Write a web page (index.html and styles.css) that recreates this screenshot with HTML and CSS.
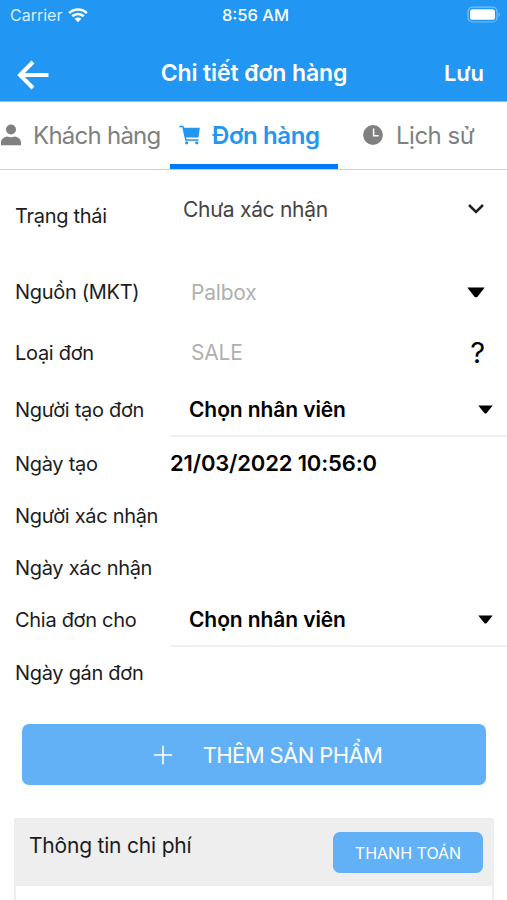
FILE: index.html
```
<!DOCTYPE html>
<html lang="vi">
	<head>
		<meta charset="utf-8">
		<meta name="viewport" content="width=device-width,initial-scale=1">
		<title>Chi tiết đơn hàng</title>
		<link rel="stylesheet" href="styles.css">
	</head>
	<body>
		<div class="screen">
			<header>
				<div class="status-bar">
					<div class="carrier">
						<span class="carrier-name">Carrier</span>
						<svg class="wifi" width="20" height="16" viewBox="0 0 20 16">
							<path d="M1.2 6.1a12.6 12.6 0 0 1 17.6 0M4.3 9.3a8.2 8.2 0 0 1 11.4 0" fill="none" stroke="#fff" stroke-width="2.7"/>
							<path d="M10 15.2L6.6 11.8a4.9 4.9 0 0 1 6.8 0z" fill="#fff"/>
						</svg>
					</div>
					<span class="time">8:56 AM</span>
					<svg class="battery" width="34" height="18" viewBox="0 0 34 18">
						<rect x="1" y="1.2" width="29" height="14.8" rx="4.5" fill="none" stroke="#fff" stroke-opacity=".4" stroke-width="1.2"/>
						<rect x="3" y="3.2" width="25" height="10.6" rx="2.6" fill="#fff"/>
						<path d="M31.6 6.3c1.6.7 1.6 3.9 0 4.6z" fill="#fff" fill-opacity=".45"/>
					</svg>
				</div>
				<div class="nav-bar">
					<svg class="back" width="32" height="30" viewBox="0 0 32 30">
						<path d="M31.500 15H3M16 2L3 15l13 13" fill="none" stroke="#fff" stroke-width="4"/>
					</svg>
					<h1>Chi tiết đơn hàng</h1>
					<span class="save">Lưu</span>
				</div>
			</header>
			<nav class="tabs">
				<div class="tab tab-customer">
					<svg width="22" height="22" viewBox="0 0 22 22" fill="#808080">
						<circle cx="11" cy="5.5" r="5"/>
						<path d="M1 21.2v-2.4c0-3.8 3-5.8 6-6.3 2.6 1 5.4 1 8 0 3 .5 6 2.5 6 6.3v2.4z"/>
					</svg>
					<span class="tab-name">Khách hàng</span>
				</div>
				<div class="tab tab-order active">
					<svg width="22" height="20" viewBox="0 0 22 20" fill="#2196f3">
						<path d="M4 2.7h16.800L19.500 12.600H6.200z"/>
						<path d="M.3 1.500h3.600L6.900 15H19.500" fill="none" stroke="#2196f3" stroke-width="1.500"/>
						<circle cx="7.6" cy="17.8" r="1.6"/>
						<circle cx="17.800" cy="17.8" r="1.6"/>
					</svg>
					<span class="tab-name">Đơn hàng</span>
				</div>
				<div class="tab tab-history">
					<svg width="20" height="20" viewBox="0 0 20 20">
						<circle cx="10" cy="10" r="9.9" fill="#808080"/>
						<path d="M10.6 3.6v7.2h5" fill="none" stroke="#fff" stroke-width="1.5"/>
					</svg>
					<span class="tab-name">Lịch sử</span>
				</div>
			</nav>
			<main>
				<div class="row row-status">
					<span class="label">Trạng thái</span>
					<div class="field">
						<span class="status-value">Chưa xác nhận</span>
						<svg class="chevron" width="18" height="12" viewBox="0 0 18 12">
							<path d="M2 2l7 7 7-7" fill="none" stroke="#222" stroke-width="2.5"/>
						</svg>
					</div>
				</div>
				<div class="row row-source">
					<span class="label">Nguồn (MKT)</span>
					<div class="field">
						<span class="placeholder">Palbox</span>
						<svg class="caret-large" width="18" height="11" viewBox="0 0 18 11">
							<path d="M.3.5h17.4L10.5 9.7q-1.5 1-3 0z"/>
						</svg>
					</div>
				</div>
				<div class="row row-type">
					<span class="label">Loại đơn</span>
					<div class="field">
						<span class="placeholder">SALE</span>
						<span class="help">?</span>
					</div>
				</div>
				<div class="row row-select">
					<span class="label">Người tạo đơn</span>
					<div class="field underlined">
						<span class="picked">Chọn nhân viên</span>
						<svg class="caret" width="15" height="9" viewBox="0 0 15 9">
							<path d="M.3.5h14.4L8.7 7.9q-1.2 1-2.4 0z"/>
						</svg>
					</div>
				</div>
				<div class="row row-date">
					<span class="label">Ngày tạo</span>
					<div class="field">
						<span class="date">21/03/2022 10:56:0</span>
					</div>
				</div>
				<div class="row">
					<span class="label">Người xác nhận</span>
				</div>
				<div class="row row-short">
					<span class="label">Ngày xác nhận</span>
				</div>
				<div class="row row-select">
					<span class="label">Chia đơn cho</span>
					<div class="field underlined">
						<span class="picked">Chọn nhân viên</span>
						<svg class="caret" width="15" height="9" viewBox="0 0 15 9">
							<path d="M.3.5h14.4L8.7 7.9q-1.2 1-2.4 0z"/>
						</svg>
					</div>
				</div>
				<div class="row row-short">
					<span class="label">Ngày gán đơn</span>
				</div>
				<div class="add-product">
					<svg width="20" height="20" viewBox="0 0 20 20">
						<path d="M10 .8v18.4M.8 10h18.4" stroke="#fff" stroke-width="1.6"/>
					</svg>
					<span class="add-name">THÊM SẢN PHẨM</span>
				</div>
				<section class="costs">
					<div class="costs-header">
						<h2>Thông tin chi phí</h2>
						<div class="pay"><span class="pay-name">THANH TOÁN</span></div>
					</div>
				</section>
			</main>
		</div>
	</body>
</html>
```
FILE: styles.css
```
* {
	margin: 0;
	padding: 0;
	box-sizing: border-box;
}
body {
	font-family: "Inter", sans-serif;
	font-size: 20px;
	background: #fff;
	color: #1c1c1e;
	overflow: hidden;
}
span, h1, h2 {
	white-space: nowrap;
}
svg {
	display: block;
	flex: none;
}
.screen {
	height: 900px;
	overflow: hidden;
}
header {
	height: 102px;
	background: #2196f3;
	border-bottom: 1px solid #7fbff5;
	color: #fff;
}
.status-bar {
	display: grid;
	grid-template-columns: 1fr auto 1fr;
	align-items: center;
	height: 30px;
	padding: 0 6px 0 10px;
}
.carrier {
	display: flex;
	align-items: center;
	gap: 6px;
}
.carrier-name {
	font-size: 16px;
	color: #d9eefd;
}
.time {
	font-size: 16.5px;
	font-weight: 500;
}
.battery {
	justify-self: end;
}
.nav-bar {
	display: grid;
	grid-template-columns: 1fr auto 1fr;
	align-items: center;
	height: 86px;
	padding: 0 23px 0 17px;
}
.back {
	margin-top: 3px;
}
h1 {
	padding-left: 7px;
	font-size: 23px;
	font-weight: 600;
	letter-spacing: -0.1px;
}
.save {
	justify-self: end;
	font-size: 22px;
	font-weight: 600;
}
.tabs {
	display: grid;
	grid-template-columns: 170px 168px 1fr;
	height: 68px;
	border-bottom: 1px solid #d0d0d0;
}
.tab {
	display: flex;
	align-items: center;
	padding-top: 4px;
	border-bottom: 5px solid transparent;
	font-size: 24px;
	letter-spacing: -0.75px;
	color: #808080;
}
.tab-customer {
	gap: 11px;
}
.tab-order {
	padding-left: 9px;
	gap: 11px;
}
.tab-history {
	padding-left: 25px;
	gap: 13px;
	letter-spacing: -0.5px;
}
.active {
	border-color: #007aff;
	color: #2196f3;
	font-weight: 600;
	letter-spacing: -0.4px;
}
.row {
	display: grid;
	grid-template-columns: 170px 1fr;
	align-items: center;
	height: 52px;
}
.row-status {
	height: 92px;
}
.row-source {
	height: 60px;
}
.row-type {
	height: 61px;
}
.row-select {
	height: 54px;
}
.row-date {
	height: 53px;
}
.row-short {
	height: 51px;
}
.label {
	padding-left: 15px;
	letter-spacing: -0.3px;
}
.field {
	display: flex;
	align-items: center;
	justify-content: space-between;
	height: 100%;
}
.row-status .field {
	padding: 0 22px 14px 13px;
}
.row-source .field, .row-type .field {
	padding: 0 22px 0 21px;
}
.row-select .field {
	padding-right: 14px;
}
.underlined {
	padding-left: 19px;
	border-bottom: 2px solid #f0f0f0;
}
.status-value {
	font-size: 21px;
	letter-spacing: -0.3px;
	color: #444;
}
.placeholder {
	font-size: 21px;
	letter-spacing: -0.2px;
	color: #b0b0b0;
}
.help {
	font-size: 29px;
	color: #000;
}
.picked {
	font-size: 21px;
	font-weight: 600;
	letter-spacing: -0.1px;
	color: #000;
}
.date {
	padding-bottom: 1px;
	font-size: 22px;
	font-weight: 600;
	letter-spacing: -0.15px;
	color: #000;
}
.add-product {
	display: flex;
	align-items: center;
	justify-content: center;
	gap: 30px;
	height: 61px;
	margin: 26px 21px 0 22px;
	padding-left: 27px;
	border-radius: 7px;
	background: #62b1f6;
	color: #fff;
	font-size: 22px;
	letter-spacing: -0.6px;
}
.costs {
	height: 120px;
	margin: 33px 13px 0 14px;
	border: 2px solid #eee;
}
.costs-header {
	display: flex;
	justify-content: space-between;
	align-items: flex-start;
	height: 66px;
	padding: 12px 9px 0 13px;
	background: #eee;
}
h2 {
	padding-top: 1px;
	font-size: 21px;
	font-weight: 400;
	letter-spacing: -0.2px;
}
.pay {
	display: flex;
	align-items: center;
	justify-content: center;
	width: 150px;
	height: 41px;
	border-radius: 7px;
	background: #62b1f6;
	color: #fff;
	font-size: 16px;
}
```
